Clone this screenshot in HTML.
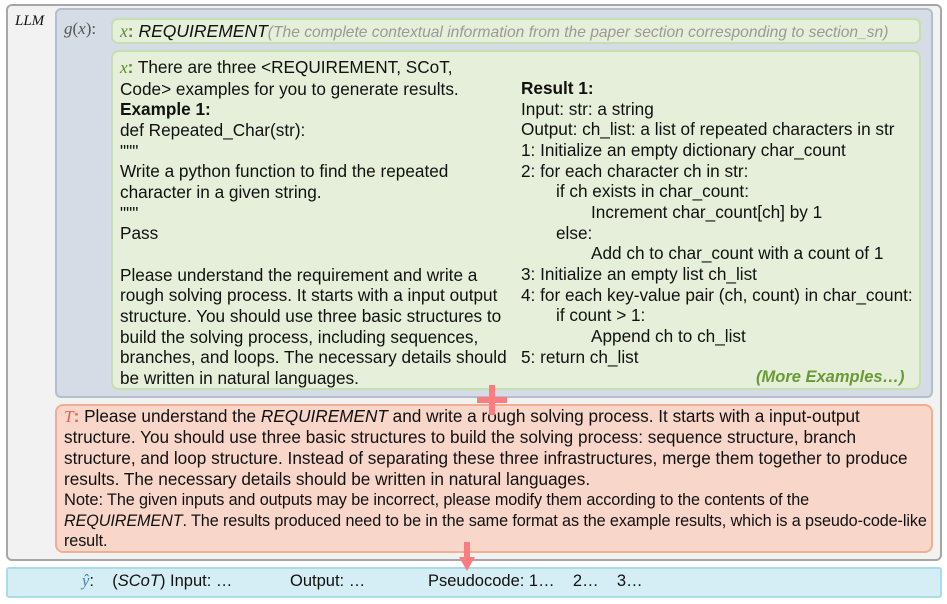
<!DOCTYPE html>
<html><head><style>
body{margin:0;width:947px;height:604px;background:#fff;position:relative;font-family:"Liberation Sans",sans-serif;color:#111;overflow:hidden}
div{position:absolute;box-sizing:border-box}
.l{white-space:nowrap;font-size:17.2px;line-height:20.65px}
.c{white-space:nowrap;font-size:16.2px;line-height:20.5px;letter-spacing:-0.1px}
.g{color:#5b8c2a;font-family:"Liberation Serif",serif;font-style:italic}
.b{color:#4a7fa8;font-family:"Liberation Serif",serif;font-style:italic}
.r{color:#e06050;font-family:"Liberation Serif",serif;font-style:italic}
.i1{padding-left:35px}.i2{padding-left:70px}
</style></head><body>
<div style="left:6px;top:4px;width:936px;height:557px;background:#f2f2f2;border:2px solid #a6a6a6;border-radius:6px"></div>
<div style="left:15px;top:13px;font-family:'Liberation Serif',serif;font-style:italic;font-size:15px">LLM</div>
<div style="left:55px;top:8px;width:878px;height:390px;background:#d6dce5;border:2px solid #b4bfcd;border-radius:6px"></div>
<div style="left:64px;top:19px;font-family:'Liberation Serif',serif;font-size:17px;color:#555"><i>g</i>(<i>x</i>):</div>
<div style="left:111px;top:18px;width:810px;height:26px;background:#e6efd9;border:2px solid #c5dfb0;border-radius:7px"></div>
<div class="l" style="left:120px;top:21px;font-size:17.5px"><span class="g">x</span><b style="color:#5b8c2a">:</b> <i>REQUIREMENT</i><i style="color:#999;font-size:15.6px">(The complete contextual information from the paper section corresponding to section_sn)</i></div>
<div style="left:111px;top:50px;width:810px;height:340px;background:#e6efd9;border:2px solid #c5dfb0;border-radius:8px"></div>
<div class="l" style="left:120px;top:57px"><span class="g">x</span><b style="color:#5b8c2a">:</b> There are three &lt;REQUIREMENT, SCoT,<br>Code&gt; examples for you to generate results.<br><b>Example 1:</b><br>def Repeated_Char(str):<br>"""<br>Write a python function to find the repeated<br>character in a given string.<br>"""<br>Pass<br><br>Please understand the requirement and write a<br>rough solving process. It starts with a input output<br>structure. You should use three basic structures to<br>build the solving process, including sequences,<br>branches, and loops. The necessary details should<br>be written in natural languages.</div>
<div class="l" style="left:521px;top:78px"><b>Result 1:</b><br>Input: str: a string<br>Output: ch_list: a list of repeated characters in str<br>1: Initialize an empty dictionary char_count<br>2: for each character ch in str:<br><span class="i1">if ch exists in char_count:</span><br><span class="i2">Increment char_count[ch] by 1</span><br><span class="i1">else:</span><br><span class="i2">Add ch to char_count with a count of 1</span><br>3: Initialize an empty list ch_list<br>4: for each key-value pair (ch, count) in char_count:<br><span class="i1">if count &gt; 1:</span><br><span class="i2">Append ch to ch_list</span><br>5: return ch_list</div>
<div class="l" style="left:756px;top:367px;color:#6a9a35;font-weight:bold;font-style:italic;font-size:16.5px">(More Examples…)</div>
<div style="left:55px;top:404px;width:878px;height:149px;background:#f8d6c9;border:2px solid #f2ae90;border-radius:8px"></div>
<div class="l" style="left:64px;top:406px;line-height:21px"><span class="r">T</span><b style="color:#e06050">:</b> Please understand the <i>REQUIREMENT</i> and write a rough solving process. It starts with a input-output<br>structure. You should use three basic structures to build the solving process: sequence structure, branch<br>structure, and loop structure. Instead of separating these three infrastructures, merge them together to produce<br>results. The necessary details should be written in natural languages.</div>
<div class="c" style="left:64px;top:490px"><span style="font-size:16.5px">Note:</span> The given inputs and outputs may be incorrect, please modify them according to the contents of the<br><i>REQUIREMENT</i>. The results produced need to be in the same format as the example results, which is a pseudo-code-like<br>result.</div>
<div style="left:477px;top:397px;width:30px;height:6px;background:#fd7c80"></div>
<div style="left:489px;top:385px;width:6px;height:30px;background:#fd7c80"></div>
<div style="left:6px;top:567px;width:936px;height:31px;background:#d5edf4;border:2px solid #a9dbe8;border-radius:3px"></div>
<div style="left:464px;top:542px;width:6px;height:16px;background:#fd7c80"></div>
<div style="left:459px;top:557px;width:0;height:0;border-left:8px solid transparent;border-right:8px solid transparent;border-top:14px solid #fd7c80"></div>
<div class="l" style="left:82px;top:571px;font-size:16.5px"><span class="b">ŷ</span>:&nbsp;&nbsp;&nbsp; (<i>SCoT</i>) Input: …</div>
<div class="l" style="left:290px;top:571px;font-size:16.5px">Output: …</div>
<div class="l" style="left:428px;top:571px;font-size:16.5px">Pseudocode: 1…&nbsp;&nbsp;&nbsp; 2…&nbsp;&nbsp;&nbsp; 3…</div>
</body></html>
